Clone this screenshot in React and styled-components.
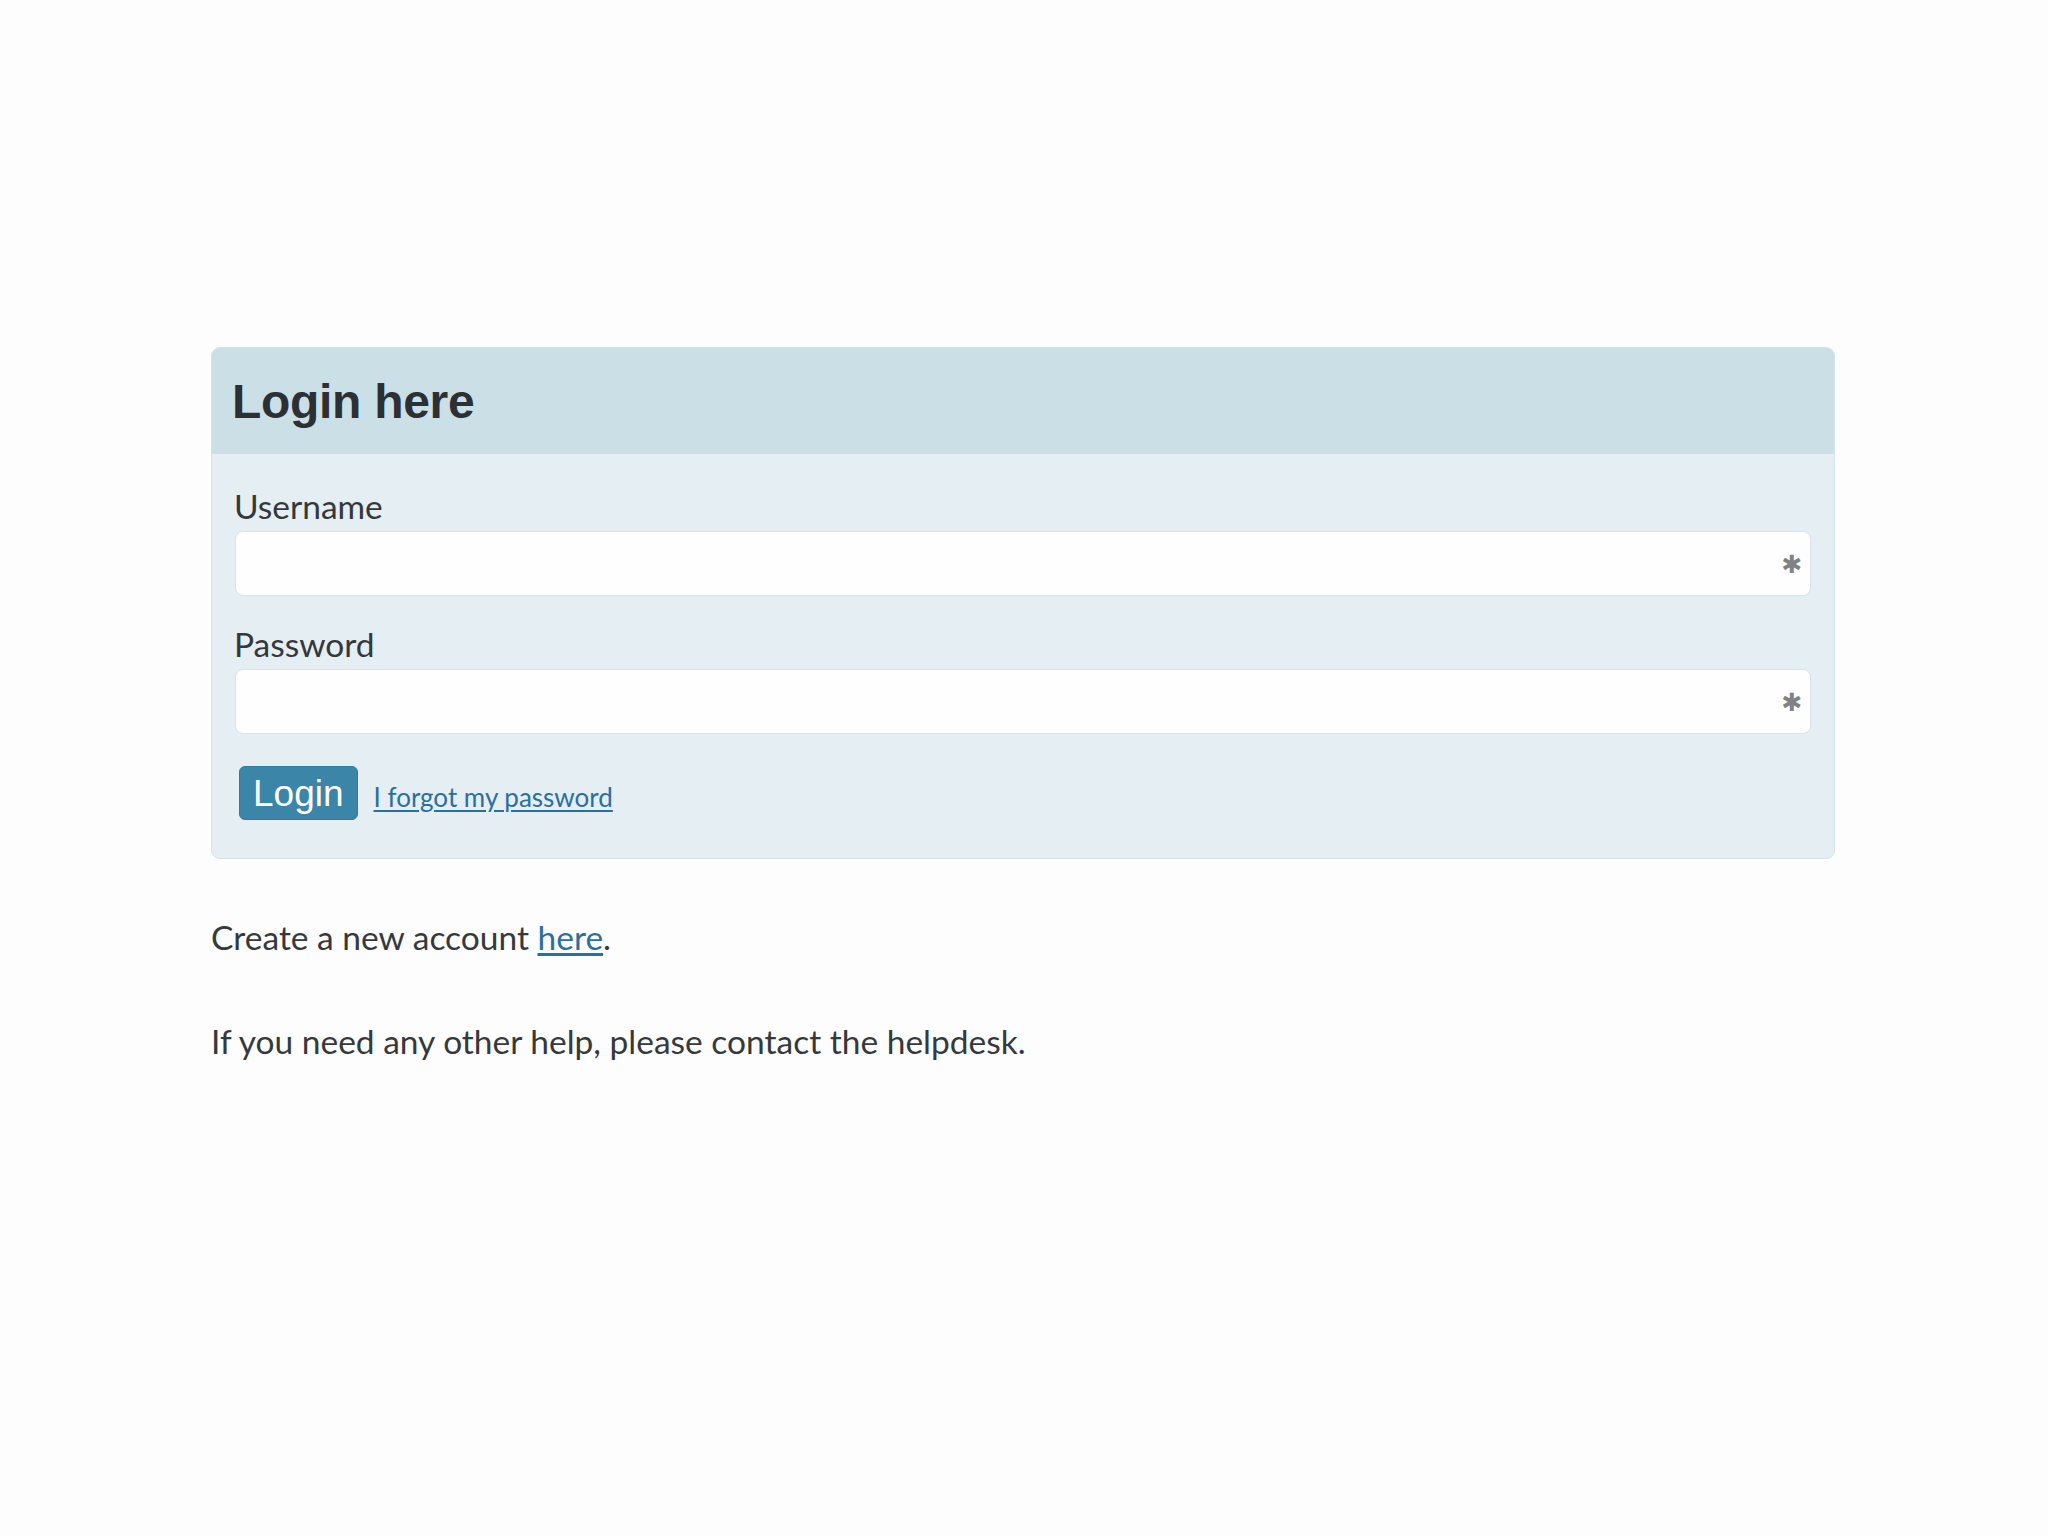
import React from "react";
import styled, { createGlobalStyle } from "styled-components";

const Global = createGlobalStyle`
  html, body { margin: 0; padding: 0; background: #fdfdfe; }
  body { font-family: Lato, "Liberation Sans", sans-serif; color: #333638; }
`;

const Page = styled.main`
  padding: 347px 0 0 211px;
  width: 1624px;
  min-height: 1189px;
`;

const Panel = styled.section`
  border: 1px solid #d2e3ea;
  border-radius: 9px;
  overflow: hidden;
  background: #e5eef2;
`;

const PanelHeader = styled.header`
  height: 106px;
  background: #cbdfe7;
  display: flex;
  align-items: center;
  padding-left: 20px;
`;

const Title = styled.h2`
  margin: 0;
  font-family: "Liberation Sans", Arial, sans-serif;
  font-weight: 700;
  font-size: 48px;
  color: #2c3034;
  letter-spacing: -0.3px;
`;

const PanelBody = styled.div`
  padding: 34px 23px 38px;
  display: flex;
  flex-direction: column;
`;

const Field = styled.div`
  display: flex;
  flex-direction: column;
  & + & { margin-top: 30px; }
`;

const Label = styled.label`
  font-size: 33.5px;
  line-height: 36px;
  color: #34383b;
  margin: 0 0 7px -1px;
`;

const InputWrap = styled.div`
  position: relative;
  height: 65px;
  background: #fefefe;
  border: 1px solid #d7e4ea;
  border-radius: 8px;
  box-sizing: border-box;
`;

const Input = styled.input`
  width: 100%;
  height: 100%;
  border: none;
  background: transparent;
  outline: none;
  box-sizing: border-box;
  padding: 0 50px 0 14px;
  font-size: 28px;
  font-family: Lato, sans-serif;
`;

const Required = styled.span`
  position: absolute;
  right: 7px;
  top: 50%;
  width: 22px;
  text-align: center;
  transform: translateY(-50%);
  color: #808284;
  font-family: "DejaVu Sans", sans-serif;
  font-size: 25px;
  font-weight: 700;
  line-height: 1;
`;

const Actions = styled.div`
  display: flex;
  align-items: center;
  margin-top: 32px;
  padding-left: 4px;
  gap: 16px;
`;

const Button = styled.button`
  height: 54px;
  padding: 0 13px;
  background: #3a85a8;
  border: 1px solid #3479a0;
  border-radius: 6px;
  color: #ffffff;
  font-family: "Liberation Sans", Arial, sans-serif;
  font-size: 37px;
  line-height: 1;
  cursor: pointer;
`;

const Link = styled.a`
  color: #2b6f9f;
  text-decoration: underline;
  text-underline-offset: 3px;
  font-size: ${(p) => p.$size || "inherit"};
`;

const ForgotLink = styled(Link)`
  margin-top: 8px;
`;

const Para = styled.p`
  margin: 0;
  font-size: 33.5px;
  line-height: 36px;
  color: #35393c;
  & + & { margin-top: 68px; }
`;

const Notes = styled.div`
  padding-top: 60px;
`;

export default function App() {
  return (
    <>
      <Global />
      <Page>
        <Panel>
          <PanelHeader>
            <Title>Login here</Title>
          </PanelHeader>
          <PanelBody>
            <Field>
              <Label htmlFor="username">Username</Label>
              <InputWrap>
                <Input id="username" type="text" />
                <Required>✱</Required>
              </InputWrap>
            </Field>
            <Field>
              <Label htmlFor="password">Password</Label>
              <InputWrap>
                <Input id="password" type="password" />
                <Required>✱</Required>
              </InputWrap>
            </Field>
            <Actions>
              <Button type="submit">Login</Button>
              <ForgotLink href="#" $size="26px">I forgot my password</ForgotLink>
            </Actions>
          </PanelBody>
        </Panel>
        <Notes>
          <Para>
            Create a new account <Link href="#">here</Link>.
          </Para>
          <Para>If you need any other help, please contact the helpdesk.</Para>
        </Notes>
      </Page>
    </>
  );
}
